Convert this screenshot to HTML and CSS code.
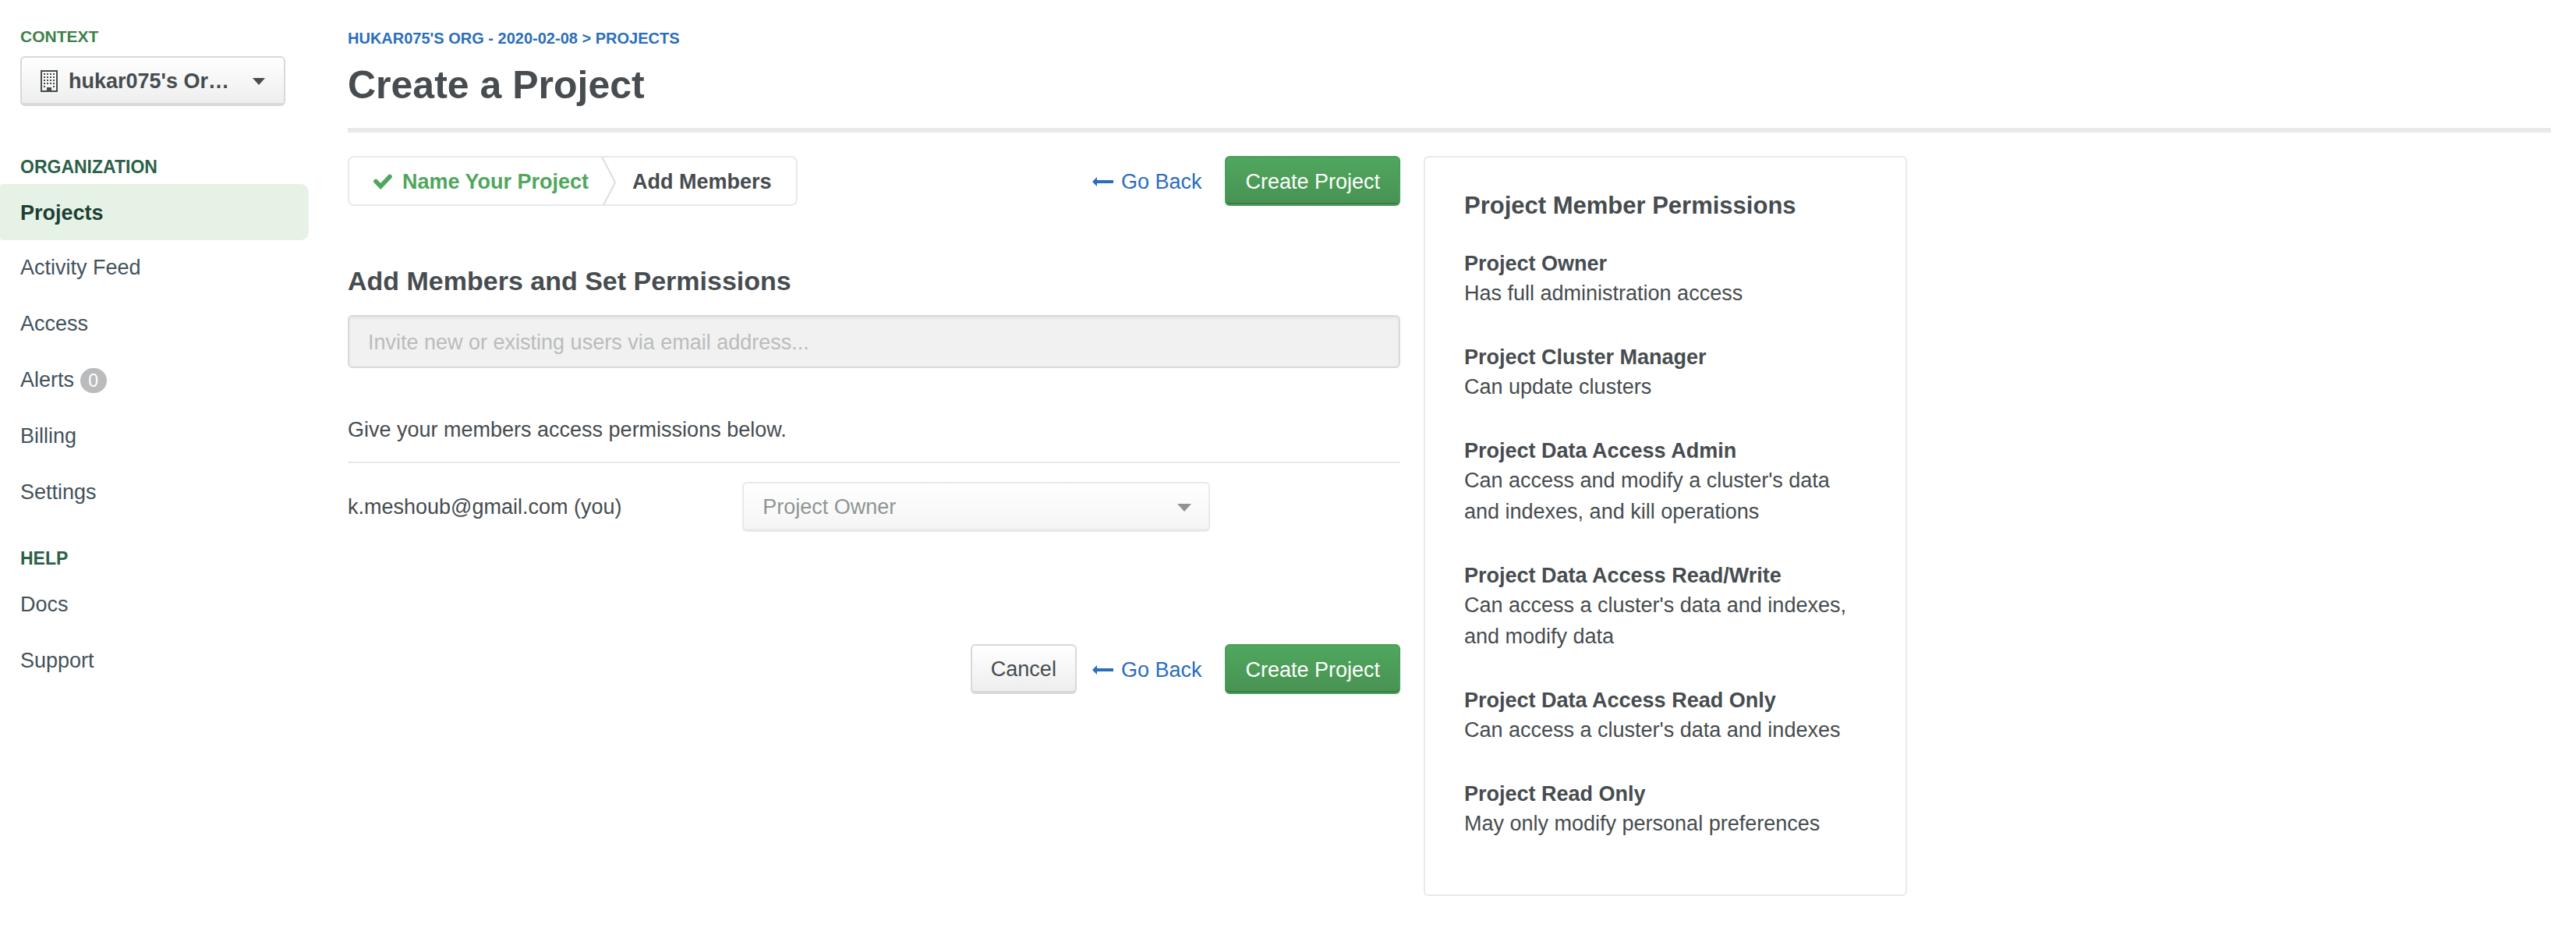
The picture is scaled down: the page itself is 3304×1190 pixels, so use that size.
FILE: index.html
```html
<!DOCTYPE html>
<html lang="en">
<head>
<meta charset="utf-8">
<meta name="viewport" content="width=device-width, initial-scale=1">
<title>Create a Project</title>
<link rel="stylesheet" href="styles.css">
</head>
<body>
<div class="app">
  <aside class="sidebar">
    <h2 class="context-label" id="context-label">CONTEXT</h2>
    <button type="button" class="btn btn-default context-button" aria-haspopup="listbox">
      <svg class="icon-org" width="22" height="28" viewBox="0 0 22 28" aria-hidden="true">
        <rect x="1" y="1" width="20" height="26" fill="none" stroke="#464c4f" stroke-width="2"/>
        <path d="M4 5h14M4 9h14M4 13h14M4 17h14" stroke="#464c4f" stroke-width="2" stroke-dasharray="2 2"/>
        <path d="M4 20h2v2H4zM16 20h2v2h-2zM8 27v-5h6v5z" fill="#464c4f"/>
      </svg>
      <span class="context-name">hukar075's Or…</span>
      <svg class="caret" width="16" height="9" viewBox="0 0 16 9" aria-hidden="true"><path d="M0 0h16L8 9z" fill="#464c4f"/></svg>
    </button>
    <nav class="nav">
      <h2 class="nav-title">ORGANIZATION</h2>
      <ul class="nav-list">
        <li><a class="nav-link is-active" href="#projects">Projects</a></li>
        <li><a class="nav-link" href="#activity">Activity Feed</a></li>
        <li><a class="nav-link" href="#access">Access</a></li>
        <li><a class="nav-link" href="#alerts">Alerts <span class="badge">0</span></a></li>
        <li><a class="nav-link" href="#billing">Billing</a></li>
        <li><a class="nav-link" href="#settings">Settings</a></li>
      </ul>
      <h2 class="nav-title">HELP</h2>
      <ul class="nav-list">
        <li><a class="nav-link" href="#docs">Docs</a></li>
        <li><a class="nav-link" href="#support">Support</a></li>
      </ul>
    </nav>
  </aside>

  <main class="main">
    <header class="page-header">
      <a class="breadcrumb" href="#projects">HUKAR075'S ORG - 2020-02-08 &gt; PROJECTS</a>
      <h1 class="page-title">Create a Project</h1>
    </header>

    <div class="content">
      <form class="form">
        <div class="toolbar">
          <ol class="steps">
            <li class="step is-done">
              <svg width="24" height="20" viewBox="0 0 24 20" aria-hidden="true"><path d="M3 9.500L9.200 16L21 3.500" fill="none" stroke="#4fa75d" stroke-width="5.600" stroke-linejoin="miter" stroke-linecap="round"/></svg>
              Name Your Project
            </li>
            <li class="step-divider" aria-hidden="true">
              <svg width="20" height="62" viewBox="0 0 20 62"><path d="M1 0L18 33L3 62" fill="none" stroke="#dcdddd" stroke-width="2"/></svg>
            </li>
            <li class="step" aria-current="step">Add Members</li>
          </ol>
          <div class="actions">
            <a class="back-link" href="#back">
              <svg width="27" height="12" viewBox="0 0 27 12" aria-hidden="true"><path d="M0 6L6 0V4H27V8H6V12z" fill="#2a6ebb"/></svg>
              Go Back
            </a>
            <button type="submit" class="btn btn-primary">Create Project</button>
          </div>
        </div>

        <h2 class="section-title"><label for="invite">Add Members and Set Permissions</label></h2>
        <input class="text-input" id="invite" type="email" placeholder="Invite new or existing users via email address..." disabled>

        <p class="hint">Give your members access permissions below.</p>
        <div class="member">
          <label class="member-email" for="role">k.meshoub@gmail.com (you)</label>
          <div class="select">
            <select id="role" disabled>
              <option>Project Owner</option>
            </select>
            <svg class="select-caret" width="18" height="10" viewBox="0 0 18 10" aria-hidden="true"><path d="M0 0h18L9 10z" fill="#8f9595"/></svg>
          </div>
        </div>

        <div class="actions actions-bottom">
          <button type="button" class="btn btn-default">Cancel</button>
          <a class="back-link" href="#back">
            <svg width="27" height="12" viewBox="0 0 27 12" aria-hidden="true"><path d="M0 6L6 0V4H27V8H6V12z" fill="#2a6ebb"/></svg>
            Go Back
          </a>
          <button type="submit" class="btn btn-primary">Create Project</button>
        </div>
      </form>

      <section class="permissions">
        <h2 class="permissions-title">Project Member Permissions</h2>
        <dl class="permissions-list">
          <dt>Project Owner</dt>
          <dd>Has full administration access</dd>
          <dt>Project Cluster Manager</dt>
          <dd>Can update clusters</dd>
          <dt>Project Data Access Admin</dt>
          <dd>Can access and modify a cluster's data and indexes, and kill operations</dd>
          <dt>Project Data Access Read/Write</dt>
          <dd>Can access a cluster's data and indexes, and modify data</dd>
          <dt>Project Data Access Read Only</dt>
          <dd>Can access a cluster's data and indexes</dd>
          <dt>Project Read Only</dt>
          <dd>May only modify personal preferences</dd>
        </dl>
      </section>
    </div>
  </main>
</div>
</body>
</html>
```
FILE: styles.css
```css
*,
*::before,
*::after {
  box-sizing: border-box;
}

body {
  margin: 0;
  background: #fff;
  color: #464c4f;
  font-family: "Liberation Sans", Arial, sans-serif;
  font-size: 27px;
  line-height: 40px;
}

h1, h2, p, ul, ol, dl, dd {
  margin: 0;
  padding: 0;
}

ul, ol {
  list-style: none;
}

a {
  color: #2a6ebb;
  text-decoration: none;
}

svg {
  display: block;
  flex: none;
}

.app {
  display: flex;
  align-items: flex-start;
}

/* Sidebar */
.sidebar {
  flex: none;
  width: 396px;
  padding-top: 35px;
}

.context-label {
  margin: 0 26px 13px;
  color: #3d8249;
  font-size: 21px;
  line-height: 24px;
}

.context-button {
  display: flex;
  align-items: center;
  width: 340px;
  margin: 0 26px 66px;
  font-weight: bold;
}

.context-name {
  flex: 1;
  margin-left: 14px;
  text-align: left;
  white-space: nowrap;
}

.nav-title {
  margin: 38px 26px 10px;
  color: #2c6049;
  font-size: 23px;
  line-height: 24px;
}

.nav-title:first-child {
  margin-top: 0;
}

.nav-link {
  display: block;
  padding: 17px 26px 15px;
  color: #43525b;
}

.nav-link.is-active {
  margin-bottom: -2px;
  border-radius: 4px 10px 10px 4px;
  background: #e7f2e6;
  color: #1c4034;
  font-weight: bold;
}

.badge {
  display: inline-block;
  min-width: 34px;
  border-radius: 16px;
  background: #babbbc;
  color: #fff;
  font-size: 23px;
  line-height: 32px;
  text-align: center;
}

/* Page header */
.main {
  flex: 1;
  min-width: 0;
  padding: 37px 32px 42px 50px;
}

.page-header {
  margin-bottom: 30px;
  padding-bottom: 25px;
  border-bottom: 6px solid #e8e9e9;
}

.breadcrumb {
  display: block;
  margin-bottom: 18px;
  font-size: 20px;
  font-weight: bold;
  line-height: 24px;
}

.page-title {
  font-size: 50px;
  line-height: 60px;
}

.content {
  display: grid;
  grid-template-columns: minmax(0, 1fr) 620px;
  align-items: start;
  gap: 30px;
  max-width: 2000px;
}

/* Buttons */
.btn {
  height: 64px;
  padding: 2px 24px 0;
  border: 2px solid;
  border-radius: 6px;
  font-family: inherit;
  font-size: 27px;
  line-height: 40px;
  white-space: nowrap;
}

.btn-default {
  border-color: #d6dad9;
  border-bottom-width: 4px;
  background: linear-gradient(#fff, #eee);
  color: #464c4f;
}

.btn-primary {
  border-color: #4a9e57;
  background: linear-gradient(#50a75e, #489253);
  box-shadow: inset 0 -2px #3c7d47;
  color: #fff;
}

/* Wizard */
.toolbar {
  display: flex;
  justify-content: space-between;
  margin-bottom: 74px;
}

.steps {
  display: flex;
  align-items: center;
  height: 64px;
  padding: 0 31px;
  border: 2px solid #e8e9e9;
  border-radius: 8px;
  font-weight: bold;
  white-space: nowrap;
}

.step {
  display: flex;
  align-items: center;
  gap: 13px;
  padding-top: 2px;
}

.step.is-done {
  color: #4fa75d;
}

.step-divider {
  margin: 0 20px 0 16px;
}

.actions {
  display: flex;
  align-items: center;
  justify-content: flex-end;
}

.actions-bottom {
  margin-top: 144px;
}

.back-link {
  display: flex;
  align-items: center;
  gap: 10px;
  margin: 0 30px 0 20px;
  padding-top: 2px;
}

.section-title {
  margin-bottom: 22px;
  font-size: 34px;
  line-height: 44px;
}

.text-input {
  display: block;
  width: 100%;
  height: 68px;
  padding: 2px 24px 0;
  border: 2px solid #d8d9d9;
  border-radius: 6px;
  background: #f1f1f1;
  box-shadow: inset 0 2px 4px rgba(0, 0, 0, 0.06);
  font-family: inherit;
  font-size: 27px;
}

.text-input::placeholder {
  color: #babcbc;
  opacity: 1;
}

.hint {
  margin-top: 59px;
  padding-bottom: 21px;
  border-bottom: 2px solid #e8e9e9;
}

.member {
  display: grid;
  grid-template-columns: 3fr 5fr;
  align-items: center;
  padding-top: 24px;
}

.select {
  position: relative;
  max-width: 600px;
}

.select select {
  display: block;
  width: 100%;
  height: 64px;
  padding: 2px 24px 0;
  border: 2px solid #e8eae9;
  border-bottom-width: 4px;
  border-radius: 6px;
  appearance: none;
  background: linear-gradient(#fff, #f5f5f5);
  color: #8f9595;
  font-family: inherit;
  font-size: 27px;
  opacity: 1;
}

.select-caret {
  position: absolute;
  top: 28px;
  right: 24px;
  pointer-events: none;
}

/* Permissions panel */
.permissions {
  padding: 42px 56px 27px 50px;
  border: 2px solid #e8e9e9;
  border-radius: 6px;
}

.permissions-title {
  margin-bottom: 36px;
  font-size: 31px;
  line-height: 40px;
}

.permissions-list dt {
  font-weight: bold;
  line-height: 36px;
}

.permissions-list dd {
  max-width: 490px;
  margin-bottom: 44px;
}
```
